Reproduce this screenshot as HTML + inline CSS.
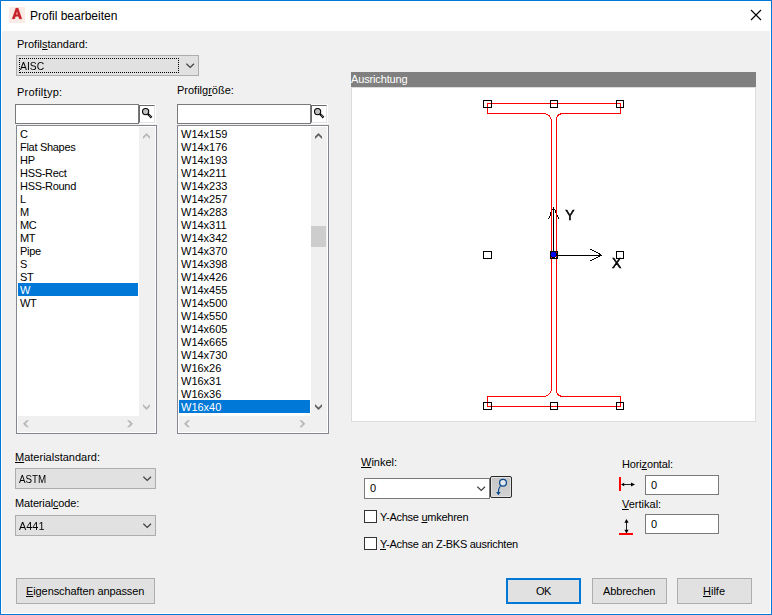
<!DOCTYPE html>
<html lang="de">
<head>
<meta charset="utf-8">
<title>Profil bearbeiten</title>
<style>
html,body{margin:0;padding:0;}
body{width:772px;height:615px;overflow:hidden;background:#f0f0f0;font-family:"Liberation Sans",sans-serif;font-size:11px;color:#000;position:relative;}
.abs{position:absolute;}
#win{position:absolute;left:0;top:0;width:770px;height:613px;border:1px solid #0078d7;background:#fff;}
#title{position:absolute;left:1px;top:1px;width:770px;height:30px;background:#fff;}
#client{position:absolute;left:2px;top:31px;width:768px;height:582px;background:#f0f0f0;}
.t{position:absolute;white-space:nowrap;line-height:13px;height:13px;font-size:11px;}
u{text-decoration:underline;text-underline-offset:1px;text-decoration-thickness:1px;}
.edit{position:absolute;background:#fff;border:1px solid #7a7a7a;box-sizing:border-box;}
.combo{position:absolute;background:#e1e1e1;border:1px solid #adadad;box-sizing:border-box;}
.btn{position:absolute;background:#e1e1e1;border:1px solid #adadad;box-sizing:border-box;text-align:center;}
.list{position:absolute;background:#fff;border:1px solid #828790;box-sizing:border-box;}
.sb{position:absolute;background:#f0f0f0;}
.li{position:absolute;left:1px;height:13px;line-height:15px;white-space:nowrap;padding-left:2px;box-sizing:border-box;}
.sel{background:#0078d7;color:#fff;}
.sbtn{position:absolute;background:#fff;box-sizing:border-box;border-top:1px solid #696969;border-left:1px solid #696969;border-right:1px solid #e3e3e3;border-bottom:1px solid #e3e3e3;}
.chk{position:absolute;width:13px;height:13px;background:#fff;border:1px solid #333;box-sizing:border-box;}
</style>
</head>
<body>
<div id="win"></div>
<div id="title"></div>
<div id="client"></div>

<!-- title bar -->
<svg class="abs" style="left:9px;top:7px" width="16" height="16" viewBox="0 0 16 16">
  <rect x="0" y="0" width="16" height="16" fill="#fbebe7"/>
  <path d="M3 12 L6.8 1 L9.2 1 L13 12 L10.3 12 L9.4 9.4 L6.6 9.4 L5.7 12 Z M7.2 7.5 L8.8 7.5 L8 4.6 Z" fill="#c51f27" fill-rule="evenodd" stroke="#d9595c" stroke-width="0.5" stroke-opacity="0.6"/>
</svg>
<div class="t" id="ttl" style="left:30px;top:9px;font-size:12px;line-height:15px;height:15px;">Profil bearbeiten</div>
<svg class="abs" style="left:750px;top:9px" width="12" height="12" viewBox="0 0 12 12"><path d="M1 1 L11 11 M11 1 L1 11" stroke="#000" stroke-width="1.1" fill="none"/></svg>

<!-- Profilstandard -->
<div class="t" id="l1" style="left:17px;top:38px;">Profil<u>s</u>tandard:</div>
<div class="combo" style="left:16px;top:55px;width:183px;height:21px;"></div>
<div class="abs" style="left:19px;top:58px;width:160px;height:15px;border:1px dotted #000;box-sizing:border-box;"></div>
<div class="t" id="c1" style="left:20px;top:60px;transform:scaleX(0.94);transform-origin:0 0;">AISC</div>
<svg class="abs" style="left:186px;top:63px" width="9" height="6" viewBox="0 0 9 6"><path d="M0.4 0.7 L4.2 4.4 L8.0 0.7" stroke="#404040" stroke-width="1.2" fill="none"/></svg>

<!-- Profiltyp -->
<div class="t" id="l2" style="left:17px;top:86px;letter-spacing:0.25px;">Profil<u>t</u>yp:</div>
<div class="edit" style="left:15px;top:104px;width:124px;height:20px;"></div>
<div class="abs" style="left:139px;top:104px;width:17px;height:20px;background:#fff;"></div><div class="sbtn" style="left:139px;top:105px;width:16px;height:18px;"></div>
<svg class="abs mag" style="left:141px;top:107px" width="12" height="12" viewBox="0 0 12 12"><circle cx="4.6" cy="4.6" r="3.1" fill="#c0c0c0" stroke="#000" stroke-width="1.1"/><path d="M7 7 L10.6 10.6" stroke="#000" stroke-width="2.2"/><path d="M8.2 8 L10.4 10.2" stroke="#fff" stroke-width="0.6"/></svg>
<div class="list" id="list1" style="letter-spacing:-0.3px;left:16px;top:125px;width:141px;height:309px;">
  <div class="sb" style="left:122px;top:1px;width:16px;height:305px;"></div>
  <div class="sb" style="left:1px;top:290px;width:137px;height:16px;"></div>
  <div class="li" style="top:1px;">C</div>
  <div class="li" style="top:14px;">Flat Shapes</div>
  <div class="li" style="top:27px;">HP</div>
  <div class="li" style="top:40px;">HSS-Rect</div>
  <div class="li" style="top:53px;">HSS-Round</div>
  <div class="li" style="top:66px;">L</div>
  <div class="li" style="top:79px;">M</div>
  <div class="li" style="top:92px;">MC</div>
  <div class="li" style="top:105px;">MT</div>
  <div class="li" style="top:118px;">Pipe</div>
  <div class="li" style="top:131px;">S</div>
  <div class="li" style="top:144px;">ST</div>
  <div class="li sel" style="top:157px;width:120px;">W</div>
  <div class="li" style="top:170px;">WT</div>
</div>

<!-- Profilgroesse -->
<div class="t" id="l3" style="left:177px;top:84px;">Profilg<u>r</u>öße:</div>
<div class="edit" style="left:177px;top:104px;width:134px;height:20px;"></div>
<div class="abs" style="left:311px;top:104px;width:17px;height:20px;background:#fff;"></div><div class="sbtn" style="left:311px;top:105px;width:16px;height:18px;"></div>
<svg class="abs mag" style="left:313px;top:107px" width="12" height="12" viewBox="0 0 12 12"><circle cx="4.6" cy="4.6" r="3.1" fill="#c0c0c0" stroke="#000" stroke-width="1.1"/><path d="M7 7 L10.6 10.6" stroke="#000" stroke-width="2.2"/><path d="M8.2 8 L10.4 10.2" stroke="#fff" stroke-width="0.6"/></svg>
<div class="list" id="list2" style="left:177px;top:125px;width:152px;height:309px;">
  <div class="sb" style="left:133px;top:1px;width:16px;height:305px;"></div>
  <div class="sb" style="left:1px;top:290px;width:148px;height:16px;"></div>
  <div class="abs" style="left:133px;top:100px;width:15px;height:21px;background:#cdcdcd;"></div>
  <div class="li" style="top:1px;">W14x159</div>
  <div class="li" style="top:14px;">W14x176</div>
  <div class="li" style="top:27px;">W14x193</div>
  <div class="li" style="top:40px;">W14x211</div>
  <div class="li" style="top:53px;">W14x233</div>
  <div class="li" style="top:66px;">W14x257</div>
  <div class="li" style="top:79px;">W14x283</div>
  <div class="li" style="top:92px;">W14x311</div>
  <div class="li" style="top:105px;">W14x342</div>
  <div class="li" style="top:118px;">W14x370</div>
  <div class="li" style="top:131px;">W14x398</div>
  <div class="li" style="top:144px;">W14x426</div>
  <div class="li" style="top:157px;">W14x455</div>
  <div class="li" style="top:170px;">W14x500</div>
  <div class="li" style="top:183px;">W14x550</div>
  <div class="li" style="top:196px;">W14x605</div>
  <div class="li" style="top:209px;">W14x665</div>
  <div class="li" style="top:222px;">W14x730</div>
  <div class="li" style="top:235px;">W16x26</div>
  <div class="li" style="top:248px;">W16x31</div>
  <div class="li" style="top:261px;">W16x36</div>
  <div class="li sel" style="top:274px;width:131px;">W16x40</div>
</div>

<svg class="abs" id="arrows" style="left:0;top:0" width="772" height="615" viewBox="0 0 772 615">
 <g fill="#b8b8b8"><polygon points="143,136.5 146.5,133 150,136.5 150,139 146.5,135.6 143,139"/><polygon points="143,404 146.5,407.4 150,404 150,406.5 146.5,410 143,406.5"/><polygon points="29,420.25 26.5,420.25 23,423.75 26.5,427.25 29,427.25 25.6,423.75"/><polygon points="127,420.25 129.5,420.25 133,423.75 129.5,427.25 127,427.25 130.4,423.75"/><polygon points="190,420.25 187.5,420.25 184,423.75 187.5,427.25 190,427.25 186.6,423.75"/><polygon points="299.3,420.25 301.8,420.25 305.3,423.75 301.8,427.25 299.3,427.25 302.7,423.75"/></g>
 <g fill="#606060"><polygon points="315,136.5 318.5,133 322,136.5 322,139 318.5,135.6 315,139"/><polygon points="315,404 318.5,407.4 322,404 322,406.5 318.5,410 315,406.5"/></g>
</svg>
<!-- Preview -->
<div class="abs" style="left:351px;top:72px;width:405px;height:15px;background:#808080;"></div>
<div class="t" id="aus" style="left:351px;top:73px;color:#fff;letter-spacing:-0.15px;">Ausrichtung</div>
<div class="abs" style="left:351px;top:87px;width:405px;height:335px;background:#fff;border:1px solid #dcdcdc;box-sizing:border-box;"></div>
<svg class="abs" id="pv" style="left:351px;top:87px" width="405" height="335" viewBox="351 87 405 335">
  <g fill="none" stroke="#000" stroke-width="1" shape-rendering="crispEdges">
    <path d="M553.5 251 V207 M558 255.5 H602"/>
    <path d="M552 209.5 H555 M551.5 210 V212 M550.5 212 V216 M549.5 216 V218 M548.5 218 V219 M555.5 210 V213 M556.5 213 V215 M557.5 215 V217 M558.5 217 V219"/>
    <path d="M590 249.5 H592 M592 250.5 H594 M594 251.5 H596 M596 252.5 H598 M598 253.5 H600 M590 260.5 H592 M592 259.5 H594 M594 258.5 H596 M596 257.5 H598 M598 256.5 H600 M599 254.5 H601"/>
  </g>
  <g fill="none" stroke="#ff0000" stroke-width="1" shape-rendering="crispEdges">
    <path d="M487.5 103.5 H620.5 V113.5 H563.5 A7 5 0 0 0 556.5 118.5 V391.5 A7 5 0 0 0 563.5 396.5 H620.5 V406.5 H487.5 V396.5 H543.5 A8 8 0 0 0 551.5 388.5 V121.5 A8 8 0 0 0 543.5 113.5 H487.5 Z"/>
  </g>
  <g fill="none" stroke="#000" stroke-width="1" shape-rendering="crispEdges">
    <rect x="483.5" y="100.5" width="8" height="7"/>
    <rect x="550.5" y="100.5" width="7" height="7"/>
    <rect x="616.5" y="100.5" width="7" height="7"/>
    <rect x="483.5" y="251.5" width="8" height="7"/>
    <rect x="616.5" y="251.5" width="7" height="7"/>
    <rect x="483.5" y="402.5" width="8" height="7"/>
    <rect x="550.5" y="402.5" width="7" height="7"/>
    <rect x="616.5" y="402.5" width="7" height="7"/>
  </g>
  <rect x="550" y="251" width="8" height="8" fill="#000" shape-rendering="crispEdges"/>
  <rect x="551" y="252" width="5" height="5" rx="1.6" fill="#0000ff"/>
  <g fill="#ff0000" shape-rendering="crispEdges"><rect x="556" y="252" width="1" height="1"/><rect x="551" y="257" width="1" height="1"/><rect x="556" y="256" width="1" height="1"/></g>
  <rect x="555" y="257" width="1" height="1" fill="#fff" shape-rendering="crispEdges"/>
  <g style="filter:grayscale(1)"><text x="565.3" y="220.3" font-family="Liberation Sans, sans-serif" font-size="14" fill="#000" stroke="#000" stroke-width="0.5">Y</text>
  <text x="611.9" y="268.2" font-family="Liberation Sans, sans-serif" font-size="14" fill="#000" stroke="#000" stroke-width="0.5">X</text></g>
</svg>

<!-- Material -->
<div class="t" id="l4" style="left:15px;top:451px;"><u>M</u>aterialstandard:</div>
<div class="combo" style="left:15px;top:468px;width:141px;height:21px;"></div>
<div class="t" id="c2" style="left:19px;top:473px;transform:scaleX(0.89);transform-origin:0 0;">ASTM</div>
<svg class="abs" style="left:143px;top:476px" width="9" height="6" viewBox="0 0 9 6"><path d="M0.4 0.7 L4.2 4.4 L8.0 0.7" stroke="#404040" stroke-width="1.2" fill="none"/></svg>
<div class="t" id="l5" style="left:15px;top:497px;letter-spacing:-0.15px;">Material<u>c</u>ode:</div>
<div class="combo" style="left:15px;top:515px;width:141px;height:21px;"></div>
<div class="t" id="c3" style="left:19px;top:520px;transform:scaleX(0.99);transform-origin:0 0;">A441</div>
<svg class="abs" style="left:143px;top:523px" width="9" height="6" viewBox="0 0 9 6"><path d="M0.4 0.7 L4.2 4.4 L8.0 0.7" stroke="#404040" stroke-width="1.2" fill="none"/></svg>

<!-- Winkel -->
<div class="t" id="l6" style="left:361px;top:456px;"><u>W</u>inkel:</div>
<div class="edit" style="left:364px;top:478px;width:126px;height:21px;"></div>
<div class="t" id="c4" style="left:370px;top:482px;">0</div>
<svg class="abs" style="left:477px;top:486px" width="9" height="6" viewBox="0 0 9 6"><path d="M0.4 0.7 L4.2 4.4 L8.0 0.7" stroke="#404040" stroke-width="1.2" fill="none"/></svg>
<div class="abs" style="left:490px;top:476px;width:22px;height:22px;border:1px solid #2b2b2b;border-radius:2px;box-sizing:border-box;background:linear-gradient(#c6c6c6,#d2d2d2);box-shadow:inset 0 0 0 1px #e2e2e2;"></div>
<svg class="abs" style="left:490px;top:476px" width="22" height="22" viewBox="0 0 22 22"><circle cx="13" cy="6.8" r="3.4" fill="#e3e9f0" stroke="#0d4a8c" stroke-width="1.3"/><path d="M10.3 10 Q8.3 12.5 8.4 16.5" stroke="#0d4a8c" stroke-width="1.2" fill="none"/><path d="M6.1 16.1 L10.7 16.1 L8.4 19.2 Z" fill="#0d4a8c"/></svg>

<div class="chk" style="left:364px;top:510px;"></div>
<div class="t" id="k1" style="left:380px;top:511px;letter-spacing:-0.27px;">Y-Achse <u>u</u>mkehren</div>
<div class="chk" style="left:364px;top:537px;"></div>
<div class="t" id="k2" style="left:380px;top:538px;letter-spacing:-0.27px;"><u>Y</u>-Achse an Z-BKS ausrichten</div>

<!-- Horizontal / Vertikal -->
<div class="t" id="l7" style="left:622px;top:458px;letter-spacing:-0.15px;">Hori<u>z</u>ontal:</div>
<div class="edit" style="left:645px;top:475px;width:74px;height:20px;"></div>
<div class="t" id="c5" style="left:651px;top:479px;">0</div>
<svg class="abs" style="left:617px;top:475px" width="20" height="18" viewBox="617 475 20 18"><rect x="619" y="477" width="2" height="14" fill="#ff0000"/><path d="M622 484.5 H634" stroke="#222" stroke-width="1"/><path d="M621 484.5 L624.2 482.8 V486.2 Z M635 484.5 L631 482.6 V486.4 Z" fill="#000"/></svg>
<div class="t" id="l8" style="left:622px;top:498px;"><u>V</u>ertikal:</div>
<div class="edit" style="left:645px;top:514px;width:74px;height:20px;"></div>
<div class="t" id="c6" style="left:651px;top:518px;">0</div>
<svg class="abs" style="left:617px;top:516px" width="20" height="20" viewBox="617 516 20 20"><rect x="619" y="533" width="14" height="2" fill="#ff0000"/><path d="M626.5 521 V532" stroke="#222" stroke-width="1"/><path d="M626.5 519 L624.4 522.8 H628.6 Z M626.5 533.4 L624.4 529.8 H628.6 Z" fill="#000"/></svg>

<!-- Buttons -->
<div class="btn" style="left:16px;top:578px;width:139px;height:26px;"></div>
<div class="t" id="b1" style="left:26px;top:585px;letter-spacing:-0.1px;"><u>E</u>igenschaften anpassen</div>
<div class="btn" style="left:506px;top:578px;width:75px;height:26px;border:2px solid #0078d7;"></div>
<div class="t" id="b2" style="left:536px;top:585px;letter-spacing:-0.5px;">OK</div>
<div class="btn" style="left:592px;top:578px;width:75px;height:26px;"></div>
<div class="t" id="b3" style="left:603px;top:585px;letter-spacing:-0.1px;">Abbrechen</div>
<div class="btn" style="left:677px;top:578px;width:75px;height:26px;"></div>
<div class="t" id="b4" style="left:703px;top:585px;"><u>H</u>ilfe</div>
</body>
</html>
